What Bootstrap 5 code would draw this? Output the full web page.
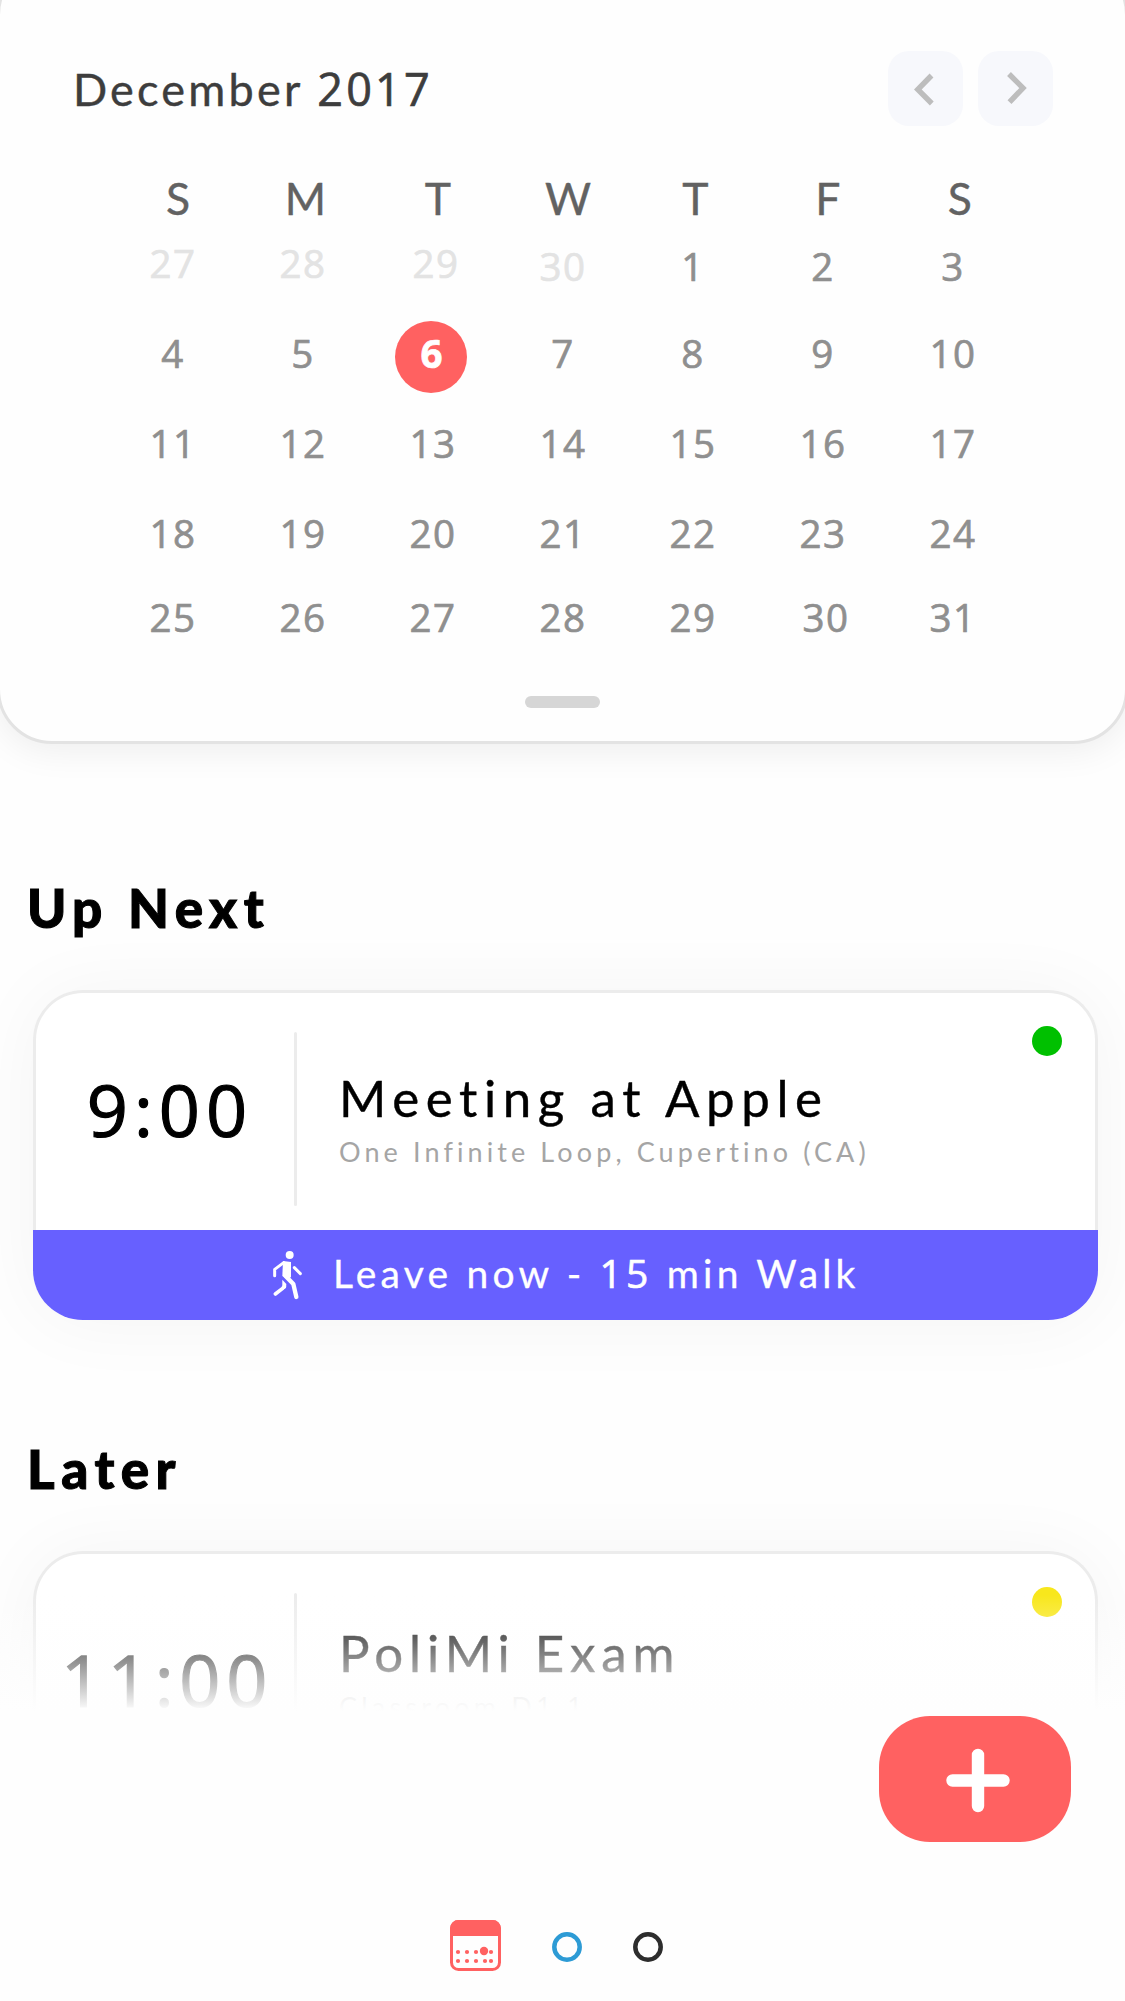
<!DOCTYPE html>
<html lang="en">
<head>
<meta charset="utf-8">
<meta name="viewport" content="width=device-width, initial-scale=1">
<title>Calendar</title>
<link rel="stylesheet" href="https://cdn.jsdelivr.net/npm/bootstrap@5.3.0/dist/css/bootstrap.min.css">
<script src="https://cdn.jsdelivr.net/npm/bootstrap@5.3.0/dist/js/bootstrap.bundle.min.js"></script>
<style>
  :root { --coral: #ff6161; --line: #ececec; }
  body { font-family: Lato, "Open Sans", sans-serif; background: #fefefe; color: #000; white-space: nowrap; }
  .phone { width: 1125px; height: 2001px; }
  .num { font-family: "Open Sans", sans-serif; -webkit-text-stroke: .7px currentColor; }

  /* month panel */
  .month { height: 784px; margin: -40px -3px 0; padding: 88px 72px 0 73px; background: #fefefe; border: 3px solid #e3e3e3; border-radius: 55px; box-shadow: 0 6px 36px rgba(0,0,0,.07); }
  .month-bar { height: 75px; }
  .month-name { font-size: 45px; line-height: 75px; letter-spacing: 3.2px; color: #3d3d3d; height: 75px; margin: 0; font-weight: 400; -webkit-text-stroke: .4px currentColor; }
  .month-arrows { gap: 15px; }
  .step { width: 75px; height: 75px; padding: 0; border: 0; border-radius: 21px; background: #f7f8fc; }
  .step svg { display: block; }
  .grid { width: 910px; margin: 47px 0 0 35px; }
  .grid > div > span { width: 14.2857%; flex: none; display: flex; justify-content: center; align-items: center; }
  .weekdays { height: 49px; font-size: 44.5px; line-height: 50px; color: #626262; -webkit-text-stroke: .4px currentColor; }
  .weekdays > span { padding-left: 10px; }
  .weekdays > span:nth-child(2), .weekdays > span:nth-child(5) { padding-left: 5px; }
  .weekdays > span:nth-child(7) { padding-left: 14px; }
  .week { height: 87px; font-size: 38.5px; line-height: 50px; letter-spacing: 1.4px; color: #8f8f8f; }
  .week-3 { height: 93px; }
  .week-5 { height: 81px; }
  .week > .faded { color: #e3e3e3; }
  .week > .raised { padding-bottom: 6px; }
  .week > .shifted { padding-left: 6px; }
  .today { width: 72px; height: 72px; margin: 8px 3px 0 0; padding-bottom: 8px; background: var(--coral); color: #fff; font-weight: 700; letter-spacing: 0; }
  .handle { width: 75px; height: 12px; border-radius: 6px; background: #d6d6d6; margin: 39px auto 0 452px; }

  /* agenda */
  .heading { font-size: 53px; line-height: 60px; font-weight: 900; letter-spacing: 6.5px; margin: 0; padding-left: 27px; -webkit-text-stroke: 1px currentColor; }
  .upnext { padding-top: 134px; }
  .later { padding-top: 119px; height: 396px; overflow: hidden; }
  .event { width: 1065px; margin: 52px 0 0 33px; border: 0; border-radius: 50px; background: #fff; box-shadow: 0 2px 76px rgba(0,0,0,.042); }
  .event-main { height: 240px; border: 3px solid var(--line); border-bottom: 0; border-radius: 50px 50px 0 0; }
  .clock { width: 258px; padding: 80px 0 0 10px; font-size: 72px; line-height: 72px; letter-spacing: 6px; text-align: center; -webkit-text-stroke-width: 1.2px; }
  .rule { width: 3px; height: 174px; margin-top: 39px; background: var(--line); border-radius: 2px; }
  .detail { padding: 80px 0 0 42px; }
  .what { font-size: 51px; line-height: 50px; letter-spacing: 6.6px; font-weight: 400; margin: 0; -webkit-text-stroke: .4px currentColor; }
  .where { font-size: 27px; line-height: 34px; letter-spacing: 4.1px; color: #a5a5a5; margin: 12px 0 0; }
  .where .num { -webkit-text-stroke-width: 0; }
  .dot { width: 30px; height: 30px; margin: 33px 33px 0 auto; }
  .later .clock { padding: 89px 0 0 4px; letter-spacing: 5.7px; }
  .later .detail { padding-top: 74px; }
  .later .what { letter-spacing: 5.9px; }
  .later .where { letter-spacing: 4.2px; }
  .leave { height: 90px; background: #6760ff; color: #fff; border-radius: 0 0 50px 50px; padding-left: 239px; font-size: 39px; letter-spacing: 4.2px; line-height: 86px; -webkit-text-stroke: .3px currentColor; }
  .leave-text { padding-bottom: 4px; }
  .leave svg { margin-right: 29px; }
  .veil { left: 0; right: 0; bottom: 0; height: 121px; background: linear-gradient(rgba(254,254,254,0), #fefefe 116px); }

  /* bottom controls */
  .add { width: 192px; height: 126px; border: 0; padding: 0; border-radius: 51px; background: var(--coral); margin: 0 54px 0 0; }
  .dock { padding: 78px 0 0 450px; gap: 51px; }
  .ring { margin-top: 3px; }
</style>
</head>
<body>
<main class="phone overflow-hidden position-relative">
  <section class="month position-relative">
    <div class="month-bar d-flex justify-content-between">
      <h1 class="month-name">December <span class="num">2017</span></h1>
      <div class="month-arrows d-flex">
        <button class="step" aria-label="Previous month"><svg width="75" height="75" fill="none" stroke="#bdbdbd" stroke-width="5.4"><path d="M43.5 24.5 29.8 38.5l14 14"/></svg></button>
        <button class="step" aria-label="Next month"><svg width="75" height="75" fill="none" stroke="#bdbdbd" stroke-width="5.4"><path d="m31 23 14 14-13.5 14.2"/></svg></button>
      </div>
    </div>
    <div class="grid">
      <div class="weekdays d-flex"><span>S</span><span>M</span><span>T</span><span>W</span><span>T</span><span>F</span><span>S</span></div>
      <div class="week num d-flex"><span class="faded raised">27</span><span class="faded raised">28</span><span class="faded raised shifted">29</span><span class="faded">30</span><span>1</span><span>2</span><span>3</span></div>
      <div class="week num d-flex"><span>4</span><span>5</span><span><b class="today rounded-circle d-flex align-items-center justify-content-center">6</b></span><span>7</span><span>8</span><span>9</span><span>10</span></div>
      <div class="week week-3 num d-flex"><span>11</span><span>12</span><span>13</span><span>14</span><span>15</span><span>16</span><span>17</span></div>
      <div class="week num d-flex"><span>18</span><span>19</span><span>20</span><span>21</span><span>22</span><span>23</span><span>24</span></div>
      <div class="week week-5 num d-flex"><span>25</span><span>26</span><span>27</span><span>28</span><span>29</span><span class="shifted">30</span><span>31</span></div>
    </div>
    <div class="handle"></div>
  </section>

  <section class="upnext">
    <h2 class="heading">Up Next</h2>
    <article class="card event">
      <div class="event-main d-flex">
        <div class="clock num">9:00</div>
        <div class="rule"></div>
        <div class="detail">
          <h3 class="what">Meeting at Apple</h3>
          <p class="where">One Infinite Loop, Cupertino (CA)</p>
        </div>
        <div class="dot rounded-circle" style="background:#00c000"></div>
      </div>
      <div class="leave d-flex align-items-center">
        <svg width="32" height="50" viewBox="66 60 96 150" fill="none" stroke="#fff" stroke-linecap="round" stroke-linejoin="round">
          <circle cx="119" cy="75" r="12" fill="#fff" stroke="none"/>
          <path fill="#fff" stroke="none" d="M99 93l24 3v44l-8 10-18-12z"/>
          <path stroke-width="9" d="M74 137v-19l27-20M133 113l18 18"/>
          <path stroke-width="13" d="M106 137l24 25 9 39"/>
          <path stroke-width="11" d="M76 192l21-16 6-7"/>
          <path fill="#fff" stroke="none" d="M97 149l12 13-1 12-11 6z"/>
        </svg>
        <span class="leave-text">Leave now - <span class="num">15</span> min Walk</span>
      </div>
    </article>
  </section>

  <section class="later position-relative">
    <h2 class="heading">Later</h2>
    <article class="card event">
      <div class="event-main d-flex">
        <div class="clock num">11:00</div>
        <div class="rule"></div>
        <div class="detail">
          <h3 class="what">PoliMi Exam</h3>
          <p class="where">Classroom D<span class="num">1.1</span></p>
        </div>
        <div class="dot rounded-circle" style="background:#f8e71c"></div>
      </div>
    </article>
    <div class="veil position-absolute"></div>
  </section>

  <div class="d-flex justify-content-end">
    <button class="add" aria-label="Add event"><svg class="d-block" width="192" height="126" stroke="#fff" stroke-width="12.4" stroke-linecap="round"><path d="M73.5 64.5h51M99 39v51"/></svg></button>
  </div>

  <nav class="dock d-flex align-items-center">
    <svg width="51" height="51" fill="var(--coral)">
      <rect x="1.5" y="1.5" width="48" height="48" rx="7" fill="none" stroke="var(--coral)" stroke-width="3"/>
      <path d="M0 16V8.500a8.500 8.500 0 0 1 8.500-8.500h34a8.500 8.500 0 0 1 8.500 8.500V16z"/>
      <circle cx="8" cy="32" r="2.100"/><circle cx="17" cy="32" r="2.100"/><circle cx="26" cy="32" r="2.100"/><circle cx="34" cy="31" r="4.200"/><circle cx="41" cy="32" r="2.100"/>
      <circle cx="8" cy="41" r="2.100"/><circle cx="17" cy="41" r="2.100"/><circle cx="26" cy="41" r="2.100"/><circle cx="35" cy="41" r="2.100"/><circle cx="41" cy="41" r="2.100"/>
    </svg>
    <svg class="ring" width="30" height="30" fill="none" stroke="#2d9bd5" stroke-width="4.500"><circle cx="15" cy="15" r="12.700"/></svg>
    <svg class="ring" width="30" height="30" fill="none" stroke="#2d2d2d" stroke-width="4.500"><circle cx="15" cy="15" r="12.700"/></svg>
  </nav>
</main>
</body>
</html>
